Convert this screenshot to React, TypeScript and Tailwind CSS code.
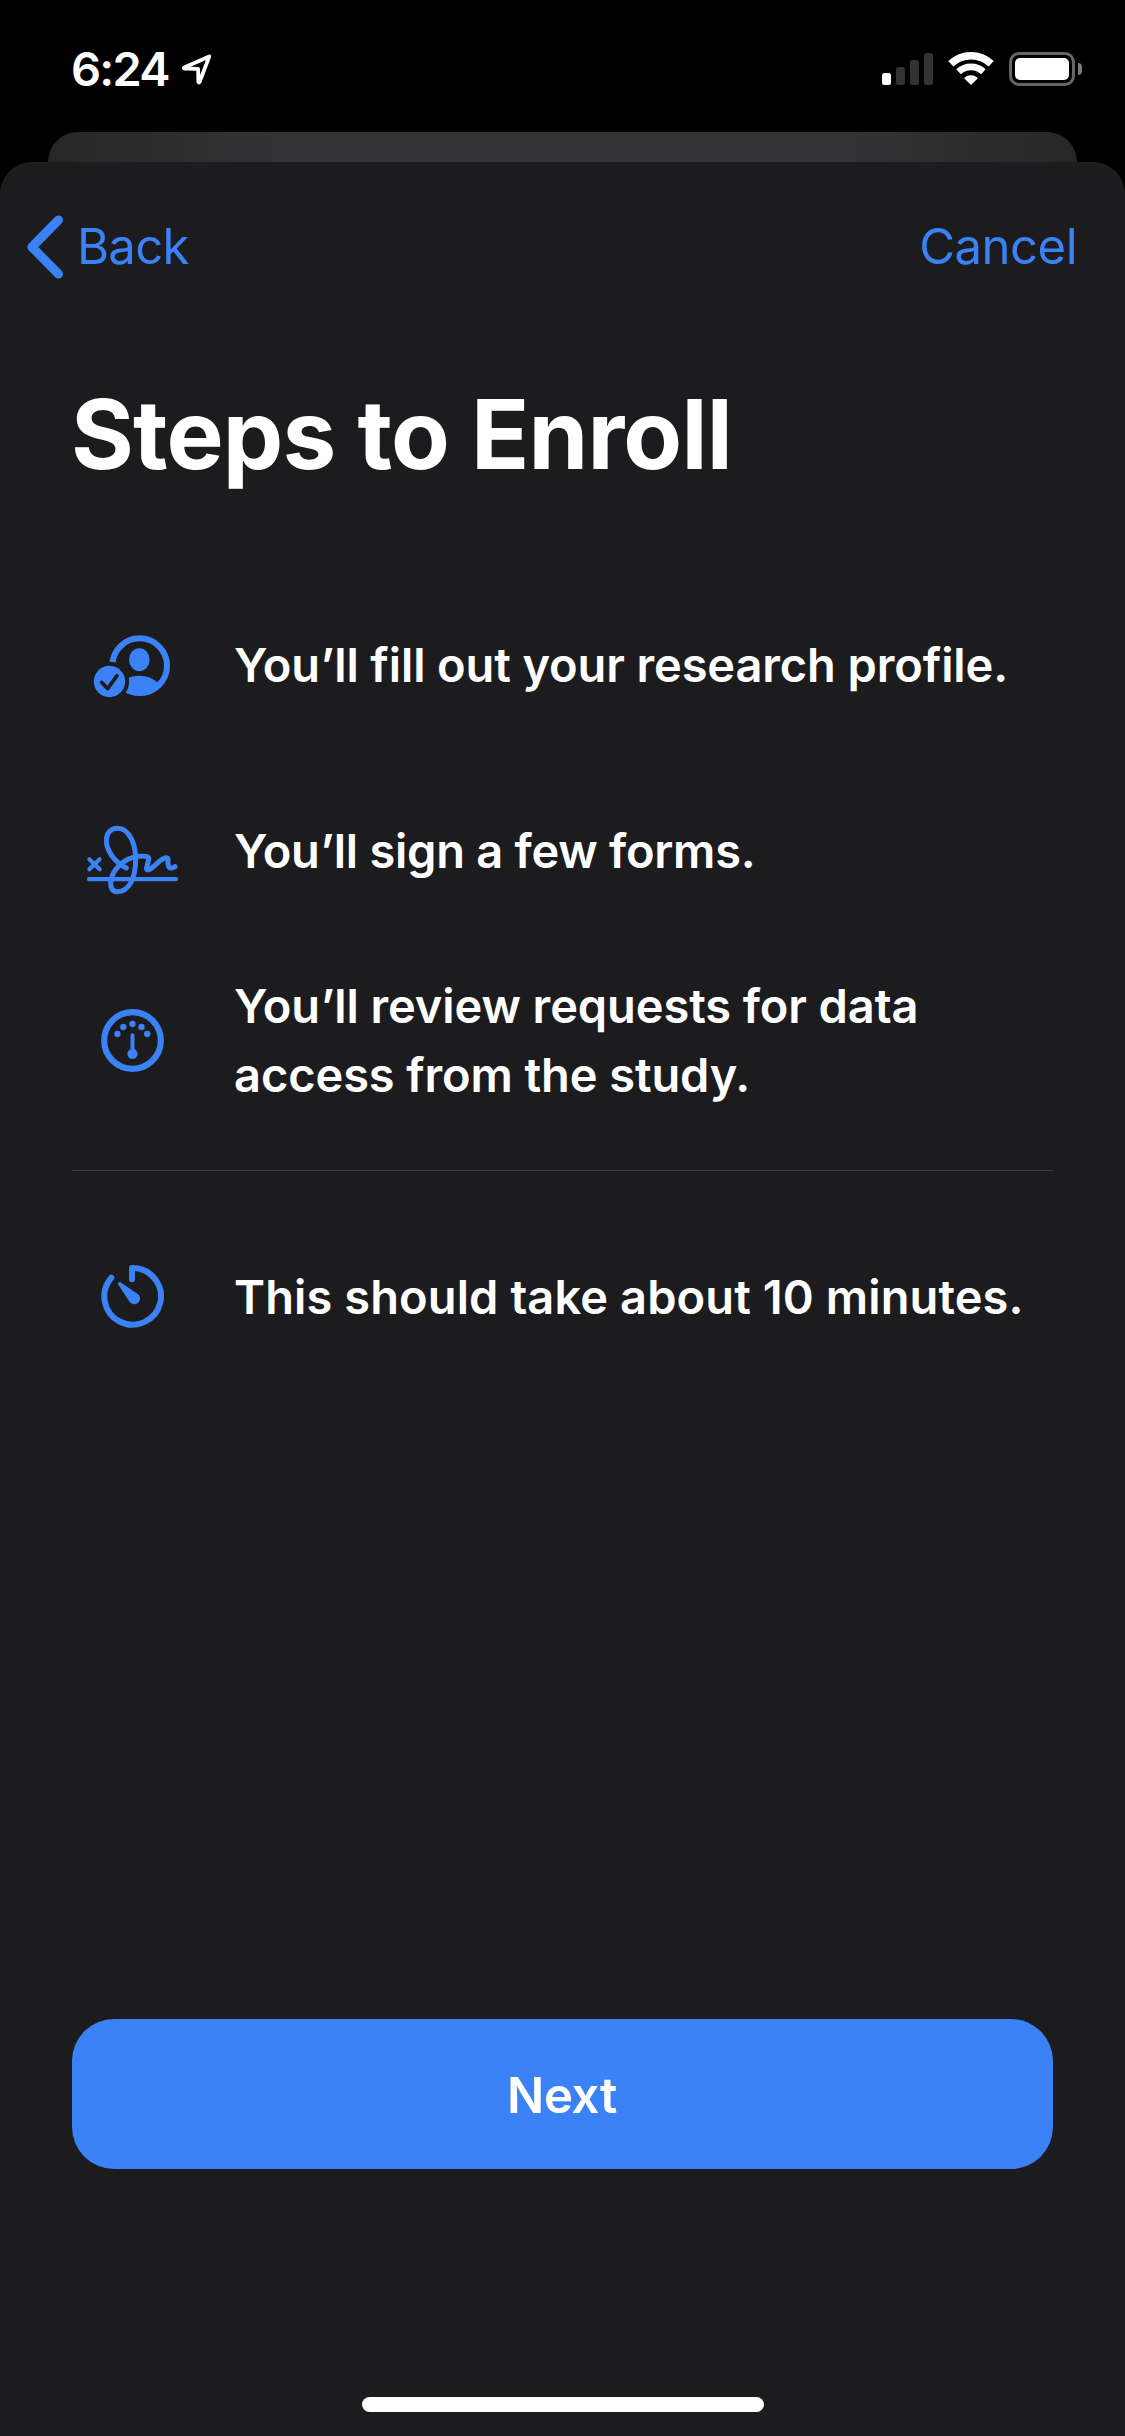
import React from "react";

function LocationArrow() {
  return (
    <svg className="ml-[12px] mb-[1px] h-[32px] w-[32px]" viewBox="0 0 32 32" fill="none" stroke="#fff" strokeWidth="3.8" strokeLinejoin="round">
      <path d="M28.3 3.4 L3.1 14.6 Q2.4 15.3 3.5 15.5 L17.1 15.9 L17.4 29 Q18 30.2 18.6 29 Z" />
    </svg>
  );
}

function Signal() {
  return (
    <div className="flex h-[32px] items-end gap-[5px]">
      <div className="h-[12px] w-[9px] rounded-[2.5px] bg-white" />
      <div className="h-[18px] w-[9px] rounded-[2.5px] bg-[#333333]" />
      <div className="h-[25px] w-[9px] rounded-[2.5px] bg-[#333333]" />
      <div className="h-[32px] w-[9px] rounded-[2.5px] bg-[#333333]" />
    </div>
  );
}

function Wifi() {
  return (
    <svg className="ml-[15px] h-[34px] w-[46px]" viewBox="-23 -33 46 34" fill="none" stroke="#fff">
      <path strokeWidth="7.4" d="M-20.2 -21.2 A29.3 29.3 0 0 1 20.2 -21.2" />
      <path strokeWidth="6.8" d="M-12.4 -13.2 A18.1 18.1 0 0 1 12.4 -13.2" />
      <path fill="#fff" stroke="none" d="M0 0 L-6.6 -6.6 Q-6.9 -7.2 -6.3 -7.6 A10 10 0 0 1 6.3 -7.6 Q6.9 -7.2 6.6 -6.6 Z" />
    </svg>
  );
}

function Battery() {
  return (
    <div className="ml-[15px] flex items-center">
      <div className="h-[34px] w-[66px] rounded-[10px] border-[3px] border-[#666666] p-[3px]">
        <div className="h-full w-full rounded-[5px] bg-white" />
      </div>
      <div className="ml-[3px] h-[12px] w-[4px] rounded-r-full bg-[#7a7a7a]" />
    </div>
  );
}

function ProfileIcon() {
  return (
    <svg className="h-[110px] w-[120px]" viewBox="6 0 360 330">
      <mask id="badge-gap">
        <rect width="390" height="330" fill="#fff" />
        <circle cx="118.5" cy="214.5" r="59" fill="#000" />
      </mask>
      <clipPath id="avatar">
        <circle cx="209" cy="167" r="91" />
      </clipPath>
      <g mask="url(#badge-gap)">
        <circle cx="209" cy="167" r="82" fill="none" stroke="#3b82f7" strokeWidth="18" />
        <ellipse cx="208" cy="149" rx="31" ry="34.5" fill="#3b82f7" />
        <circle cx="208" cy="282" r="85" fill="#3b82f7" clipPath="url(#avatar)" />
      </g>
      <circle cx="118.5" cy="214.5" r="47" fill="#3b82f7" />
      <path d="M95 217 L113 236 L141 197" fill="none" stroke="#1c1c1e" strokeWidth="11" strokeLinecap="round" strokeLinejoin="round" />
    </svg>
  );
}

function SignatureIcon() {
  return (
    <svg className="h-[110px] w-[120px]" viewBox="6 0 360 330" fill="none" stroke="#3b82f7" strokeLinecap="round" strokeLinejoin="round">
      <path strokeWidth="12.5" d="M58 148 L89 178 M89 148 L58 178 M57 207.500 H318" />
      <path strokeWidth="15" d="M169 174 C135 158 109 122 109 91 C109 69 123 55 143 55 C177 55 197 100 197 148 C197 205 177 245 142 245 C126 245 121 232 122 217 C125 180 160 145 205 139 C230 137 239 139 236 150 C232 166 224 183 236 179 C252 174 270 145 288 143 C300 142 290 160 296 170 C300 177 308 174 315 170" />
    </svg>
  );
}

function GaugeIcon() {
  return (
    <svg className="h-[100px] w-[120px]" viewBox="-24 0 360 300" fill="#3b82f7">
      <circle cx="157.500" cy="151.500" r="85" fill="none" stroke="#3b82f7" strokeWidth="18.500" />
      <circle cx="112.500" cy="132" r="9.500" />
      <circle cx="130" cy="111" r="9.500" />
      <circle cx="157.500" cy="102" r="9.500" />
      <circle cx="184.500" cy="111" r="9.500" />
      <circle cx="201.500" cy="132" r="9.500" />
      <path d="M157.500 136 V185" stroke="#3b82f7" strokeWidth="12" strokeLinecap="round" />
      <circle cx="157.500" cy="191.500" r="15.500" />
    </svg>
  );
}

function TimerIcon() {
  return (
    <svg className="h-[100px] w-[120px]" viewBox="-24 0 360 300">
      <path d="M156 103 V69 H158 A85 85 0 1 1 94 98" fill="none" stroke="#3b82f7" strokeWidth="18" strokeLinecap="round" strokeLinejoin="round" />
      <path d="M122.500 112.500 L170 144.500 A17.500 17.500 0 1 1 147 168 L115 119 C112 114 117 109 122.500 112.500 Z" fill="#3b82f7" />
    </svg>
  );
}

const rowText = "ml-[42px] font-semibold text-[47px] leading-[69px] whitespace-nowrap";

export default function App() {
  return (
    <div className="flex h-[2436px] w-[1125px] flex-col overflow-hidden bg-black font-['Inter',sans-serif] text-white">
      <header className="flex h-[132px] shrink-0 items-center justify-between pt-[6px] pr-[43px] pl-[71px]">
        <div className="flex items-center">
          <span className="text-[47px] leading-[56px] font-semibold tracking-[-1.8px]">6:24</span>
          <LocationArrow />
        </div>
        <div className="flex items-center">
          <Signal />
          <Wifi />
          <Battery />
        </div>
      </header>

      <div className="mx-[48px] h-[66px] shrink-0 rounded-t-[30px] bg-[linear-gradient(90deg,#272728_0%,#333335_22%,#333335_78%,#272728_100%)]" />

      <main className="-mt-[36px] flex grow flex-col rounded-t-[32px] bg-[#1c1c1e]">
        <nav className="flex h-[168px] shrink-0 items-center justify-between pr-[48px] pl-[26px] text-[49px] leading-[60px] text-[#3b82f7]">
          <button className="flex items-center">
            <svg className="mt-px h-[64px] w-[37px]" viewBox="0 0 37 64" fill="none" stroke="#3b82f7" strokeWidth="9" strokeLinecap="round" strokeLinejoin="round">
              <path d="M32.500 5 L5.900 32 L32.500 59" />
            </svg>
            <span className="ml-[14px] pt-[2px] tracking-[-0.7px]">Back</span>
          </button>
          <button className="pt-[2px] tracking-[-0.5px]">Cancel</button>
        </nav>

        <div className="flex flex-col px-[72px]">
          <h1 className="-ml-px mt-[46px] text-[96px] leading-[116px] font-bold tracking-[-0.8px]">Steps to Enroll</h1>

          <div className="mt-[118px] flex h-[110px] items-center">
            <ProfileIcon />
            <p className={`${rowText} pb-px tracking-[-0.12px]`}>You’ll fill out your research profile.</p>
          </div>
          <div className="mt-[90px] flex h-[110px] items-center">
            <SignatureIcon />
            <p className={`${rowText} pb-[29px] tracking-[-0.26px]`}>You’ll sign a few forms.</p>
          </div>
          <div className="mt-[51px] flex h-[138px] items-center">
            <GaugeIcon />
            <p className={`${rowText} tracking-[-0.1px]`}>
              You’ll review requests for data
              <br />
              access from the study.
            </p>
          </div>
          <hr className="mt-[61px] h-px border-0 bg-[#3c3c3e]" />
          <div className="mt-[74px] flex h-[100px] items-center">
            <TimerIcon />
            <p className={`${rowText} pt-[3px] tracking-[0.1px]`}>This should take about 10 minutes.</p>
          </div>

          <button className="mt-[674px] h-[150px] rounded-[42px] bg-[#3b82f7] pt-[3px] pr-[1px] text-[49px] leading-[60px] font-semibold tracking-[-0.3px]">
            Next
          </button>
        </div>

        <div className="mt-[228px] ml-[362px] h-[15px] w-[402px] rounded-full bg-white" />
      </main>
    </div>
  );
}
